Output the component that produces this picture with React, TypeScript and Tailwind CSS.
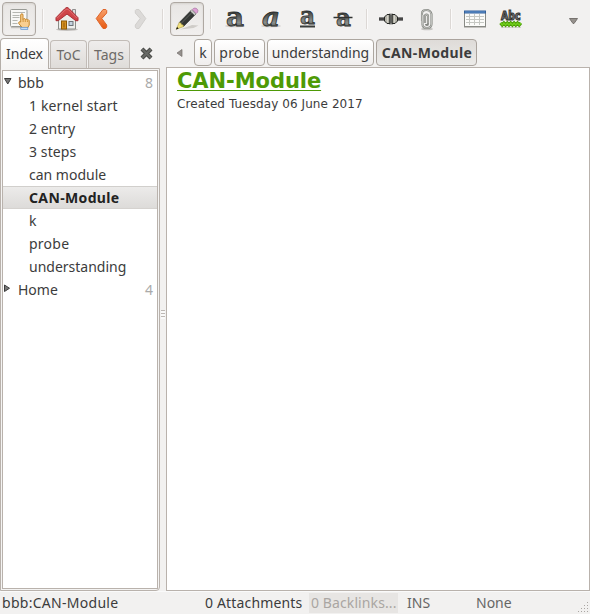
import React from "react";

function Sep({ className = "" }: { className?: string }) {
  return <span className={"h-5 w-px shrink-0 bg-[#dcd8d5] shadow-[1px_0_0_#fbfafa] " + className} />;
}

function IndexIcon() {
  return (
    <svg width="24" height="24" viewBox="0 0 24 24">
      <path d="M4 20.500h16" stroke="#c3c0bc" strokeWidth="1.500" />
      <rect x="3.500" y="2.500" width="16.500" height="17" rx="1" fill="#f8f8f6" stroke="#999b96" />
      <path d="M5.500 5.500h12.500M5.500 8.500h7M5.500 10.500h7M5.500 13.500h5M5.500 16.500h5" stroke="#b5b7b2" />
      <path d="M13.700 15V8q.1-1.200 1.200-1.200T16 8v4.500q.4-.9 1.300-.9t1.100.9q.4-.5 1.100-.4t1 .8q1.100-.5 1.700.7v4.500L20.500 21h-5l-3.700-4.500q-.4-1.500.6-1.700z" fill="#f9cf91" stroke="#c17d18" strokeWidth=".9" />
      <path d="M16.100 12.500V15M18.300 12.700V15M20.400 13.400V15" stroke="#c17d18" strokeWidth=".7" />
      <rect x="13.800" y="20.300" width="7" height="2.200" fill="#c4dcf7" stroke="#6094cf" strokeWidth=".7" />
    </svg>
  );
}

function HomeIcon() {
  return (
    <svg width="24" height="26" viewBox="0 0 24 26">
      <ellipse cx="12" cy="23.500" rx="11" ry="1.500" fill="#c4c1be" />
      <path d="M17.500 3.500h3V10h-3z" fill="#dfdfdc" stroke="#777" strokeWidth=".8" />
      <path d="M3.500 13 12 5l8.500 8v10h-17z" fill="#edeeeb" stroke="#8b8d88" />
      <rect x="6.500" y="15" width="5" height="8" fill="#d6931f" stroke="#8f5902" />
      <rect x="8" y="16.500" width="2" height="5" fill="#b57515" />
      <rect x="14" y="15.500" width="4" height="4" fill="#c4d2df" stroke="#6d7277" />
      <path d="M12 1.500Q11 1.500 9.500 3L1 11.700v3h2.200L12 8l8.800 6.700H23v-3L14.500 3Q13 1.500 12 1.500z" fill="#cf4549" stroke="#a92d34" strokeLinejoin="round" />
      <path d="m2 12.200 8.500-8.500Q12 2.300 13.500 3.700L22 12.200" fill="none" stroke="#e27a7b" strokeWidth=".8" />
    </svg>
  );
}

function Chevron({ forward = false }: { forward?: boolean }) {
  return (
    <svg width="13" height="22" viewBox="0 0 13 22" className={forward ? "-scale-x-100" : ""}>
      <defs>
        <linearGradient id="orange" x2="0" y2="1"><stop stopColor="#f8a06a" /><stop offset="1" stopColor="#e75a12" /></linearGradient>
      </defs>
      <path d="M8 1.500 1.200 10.500 8 20.500h2.500l1.200-1.500v-2L6.800 10.500 11.700 5V2.500l-.9-1z" fill={forward ? "#dcdad8" : "url(#orange)"} stroke={forward ? "#d1cfcc" : "#de6429"} strokeLinejoin="round" />
    </svg>
  );
}

function PencilIcon() {
  return (
    <svg width="24" height="24" viewBox="0 0 24 24">
      <path d="M5 22.500 17 18l6.500.5-5 2.500z" fill="#cfccc8" />
      <path d="m4.300 15.500L16.500 3l4.300 4L8.500 19.500z" fill="#343735" stroke="#222422" strokeWidth=".6" />
      <path d="m6 16.500L18 4.500" stroke="#5e615d" strokeWidth="1" />
      <path d="m1.200 22.300 3-6.800 1.600.5.8 1.500 1.500.5.5 1.500z" fill="#f2e07d" stroke="#a99b43" strokeWidth=".6" />
      <path d="m1 22.500 1.100-2.600 1.500 1.600z" fill="#111" />
      <path d="m17.300 2.500 4 4 1.300-1.300q1-2.100-.8-3.500-2-1.300-3.500-.1z" fill="#dda0d5" stroke="#a875a0" strokeWidth=".7" />
      <path d="m16 3.500 4.200 4.200" stroke="#c6c7c4" strokeWidth="1.800" />
    </svg>
  );
}

function Letter({ kind }: { kind: "bold" | "italic" | "under" | "strike" }) {
  const large = kind === "bold" || kind === "italic";
  return (
    <svg width="22" height="36" viewBox="0 -6 22 36" className="overflow-visible">
      <defs>
        <linearGradient id="ink" x2="0" y2="1"><stop offset=".35" stopColor="#3a3d3c" /><stop offset=".7" stopColor="#8a8e8b" /><stop offset="1" stopColor="#303332" /></linearGradient>
      </defs>
      {large && <ellipse cx="11" cy="19" rx="10" ry="1.300" fill="#cfccc9" />}
      <text
        x={large ? 2 : 4} y={kind === "under" ? 16.500 : 18.500}
        textLength={large ? 18 : 15} lengthAdjust="spacingAndGlyphs"
        className={"font-['DejaVu_Serif',serif] font-bold " + (kind === "bold" ? "text-[26px]" : kind === "italic" ? "text-[26px] italic" : "text-[24px]")}
        fill="url(#ink)" stroke="#2c2f2d" strokeWidth=".8"
      >a</text>
      {kind === "under" && <path d="M4 19.500h15" stroke="#3b3e3c" strokeWidth="2" />}
      {kind === "strike" && <path d="M1.500 10.500h19" stroke="#303331" strokeWidth="1.500" />}
    </svg>
  );
}

function LinkIcon() {
  return (
    <svg width="26" height="16" viewBox="0 0 26 16">
      <path d="M1 8h6M19 8h6" stroke="#111" strokeWidth="3" />
      <path d="M1 8h6M19 8h6" stroke="#aaa" strokeWidth=".7" />
      <path d="M6.500 6 9 3.500h3v9H9L6.500 10zM19.500 6 17 3.500h-3v9h3l2.500-2.500z" fill="#b4b3a9" stroke="#232522" />
      <path d="M9.500 4.500v7M16.500 4.500v7" stroke="#d4d3ca" />
      <path d="M12 2.500v11M14 2.500v11" stroke="#30322e" />
    </svg>
  );
}

function ClipIcon() {
  return (
    <svg width="14" height="23" viewBox="0 0 14 23" fill="none">
      <ellipse cx="7" cy="21" rx="6" ry="1.300" fill="#c5c4c1" />
      <path d="M5 15V8q0-1.500 1.500-1.500T8 8v7.500q0 1.500-1 1.500t-1-1M2 13V5.500Q2 2 6.300 2T11.500 6v10q0 4-4.500 4t-4.500-3.500V7" stroke="#838580" strokeWidth="2.100" />
      <path d="M5 15V8q0-1.500 1.500-1.500T8 8v7.500M2 13V5.500Q2 2 6.300 2T11.500 6v10q0 4-4.500 4t-4.500-3.500V7" stroke="#d7d9d4" strokeWidth=".7" />
    </svg>
  );
}

function TableIcon() {
  return (
    <svg width="24" height="20" viewBox="0 0 24 20">
      <path d="M1 18.500h22" stroke="#c3c1be" strokeWidth="1" />
      <rect x="1.500" y="2.500" width="21" height="15" fill="#fbfbf9" stroke="#888a85" />
      <path d="M3 7.500h18M3 10.500h18M3 13.500h18M6.500 5v11M11.500 5v11M16.500 5v11" stroke="#c5c7c2" />
      <rect x="1.500" y="2" width="21" height="2" fill="#6798d2" stroke="#315f9a" />
    </svg>
  );
}

function SpellIcon() {
  return (
    <svg width="24" height="27" viewBox="0 -3 24 27" className="overflow-visible">
      <path d="M2 18.500h20" stroke="#d2d0cd" />
      <text x="2" y="11" textLength="19.500" lengthAdjust="spacingAndGlyphs" className="font-['DejaVu_Sans',sans-serif] text-[11.5px] font-bold" fill="#888" stroke="#303230" strokeWidth="1.100">Abc</text>
      <path d="m1.500 14 1.700 2 1.700-2 1.700 2 1.700-2 1.700 2 1.700-2 1.700 2 1.700-2 1.700 2 1.700-2 1.700 2 1.700-2" fill="none" stroke="#4b9c07" strokeWidth="3.200" />
      <path d="m1.500 14 1.700 2 1.700-2 1.700 2 1.700-2 1.700 2 1.700-2 1.700 2 1.700-2 1.700 2 1.700-2 1.700 2 1.700-2" fill="none" stroke="#72cf1d" strokeWidth="1.300" />
    </svg>
  );
}

const pressed = "flex h-[34px] w-[34px] shrink-0 items-center justify-center rounded border border-[#aea8a2] bg-linear-to-b from-[#e8e6e4] to-[#f1efee] shadow-[inset_0_1px_2px_#d6d2ce] ";

function Toolbar() {
  return (
    <header className="flex h-[38px] items-center">
      <button className={pressed + "ml-[2px]"}><IndexIcon /></button>
      <Sep className="ml-[6px]" />
      <span className="ml-[12px]"><HomeIcon /></span>
      <span className="ml-[16px]"><Chevron /></span>
      <span className="ml-[26px]"><Chevron forward /></span>
      <Sep className="ml-[15px]" />
      <button className={pressed + "ml-[7px]"}><PencilIcon /></button>
      <Sep className="ml-[6px]" />
      <span className="ml-[13px]"><Letter kind="bold" /></span>
      <span className="ml-[14px]"><Letter kind="italic" /></span>
      <span className="ml-[14px]"><Letter kind="under" /></span>
      <span className="ml-[14px]"><Letter kind="strike" /></span>
      <Sep className="ml-[12px]" />
      <span className="ml-[11px]"><LinkIcon /></span>
      <span className="ml-[16px]"><ClipIcon /></span>
      <Sep className="ml-[16px]" />
      <span className="ml-[12px]"><TableIcon /></span>
      <span className="ml-[12px]"><SpellIcon /></span>
      <svg className="ml-[46px] mt-1" width="9" height="6"><path d="M.5.5h8L5 5.500H4z" fill="#96928d" stroke="#77736f" /></svg>
    </header>
  );
}

const pages = [
  { name: "1 kernel start", cls: "tracking-[0.12px]" },
  { name: "2 entry", cls: "" },
  { name: "3 steps", cls: "tracking-[0.1px]" },
  { name: "can module", cls: "" },
  { name: "CAN-Module", cls: "font-bold tracking-[0.36px] text-[#222] border-y border-t-[#d1cfcc] border-b-[#d5d2cf] bg-linear-to-b from-[#ecebea] to-[#dddbd9]" },
  { name: "k", cls: "" },
  { name: "probe", cls: "tracking-[0.25px]" },
  { name: "understanding", cls: "" },
];

function Sidebar() {
  return (
    <aside className="flex h-[553px] w-[160px] shrink-0 flex-col">
      <nav className="flex h-[30px] shrink-0 items-end text-[#6d6a67]">
        <div className="z-10 -mb-px flex h-[31px] w-[49px] items-center justify-center rounded-t border border-b-0 border-[#b4aea8] bg-linear-to-b from-white to-[#f5f4f3] text-[#3c3c3c]">Index</div>
        <div className="ml-px flex h-[28px] w-[37px] items-center justify-center rounded-t border border-b-0 border-[#c2bcb7] bg-linear-to-b from-[#efedec] to-[#dfdcd9] pt-px">ToC</div>
        <div className="ml-px flex h-[28px] w-[42px] items-center justify-center rounded-t border border-b-0 border-[#c2bcb7] bg-linear-to-b from-[#efedec] to-[#dfdcd9] pt-px">Tags</div>
        <svg className="mb-[8px] ml-[10px]" width="13" height="13" viewBox="0 0 13 13"><path d="m2 2 9 9m0-9-9 9" stroke="#4b4c49" strokeWidth="4.200" /><path d="m2 2 9 9m0-9-9 9" stroke="#686a66" strokeWidth="2" /></svg>
      </nav>
      <div className="flex min-h-0 flex-1 rounded-br border border-[#b9b2ac] bg-[#f5f4f3] p-px">
        <div className="flex-1 border border-[#b9b2ac] bg-white">
          <div className="flex h-[23px] items-center pr-[4px]">
            <svg className="-mt-0.5" width="15" height="9" viewBox="0 0 15 9"><path d="M1.500 1.500h6.500L4.750 7z" fill="#777" stroke="#3c3c3c" /></svg>
            <span className="flex-1">bbb</span><span className="text-[#aaa]">8</span>
          </div>
          {pages.map(p => <div key={p.name} className={"flex h-[23px] items-center pl-[26px] whitespace-nowrap " + p.cls}>{p.name}</div>)}
          <div className="flex h-[23px] items-center pr-[4px]">
            <svg className="-mt-0.5" width="15" height="9" viewBox="0 0 15 9"><path d="M1.500 1v6.500l5-3.250z" fill="#777" stroke="#3c3c3c" /></svg>
            <span className="flex-1">Home</span><span className="text-[#aaa]">4</span>
          </div>
        </div>
      </div>
    </aside>
  );
}

const crumb = "flex h-[27px] items-center justify-center rounded-[4px] border ";

export default function App() {
  return (
    <div className="flex h-[614px] w-[590px] flex-col overflow-hidden bg-[#f2f1f0] font-['Noto_Sans','Open_Sans',sans-serif] text-[14px] leading-[20px] text-[#3c3c3c]">
      <Toolbar />
      <main className="flex h-[553px]">
        <Sidebar />
        <div className="flex w-[6px] items-center justify-center">
          <div className="h-[9px] w-1 bg-[repeating-linear-gradient(to_bottom,#bdb8b4_0px,#bdb8b4_1px,#fafafa_1px,#fafafa_3px)]" />
        </div>
        <section className="flex w-[424px] flex-col">
          <nav className="flex h-[29px] shrink-0 items-center">
            <svg className="ml-[10px]" width="7" height="8"><path d="M6 .5v7L1 4z" fill="#95918d" stroke="#736f6c" strokeWidth=".7" /></svg>
            <span className={crumb + "ml-[11px] w-[18px] border-[#aca69f] bg-linear-to-b from-white to-[#f0eeed]"}>k</span>
            <span className={crumb + "ml-[2px] w-[51px] border-[#aca69f] bg-linear-to-b from-white to-[#f0eeed] tracking-[0.25px]"}>probe</span>
            <span className={crumb + "ml-[2px] w-[107px] border-[#aca69f] bg-linear-to-b from-white to-[#f0eeed]"}>understanding</span>
            <span className={crumb + "ml-[2px] w-[101px] border-[#aaa39d] bg-linear-to-b from-[#dedbd8] to-[#ecebe9] pt-px pl-px font-bold tracking-[0.36px]"}>CAN-Module</span>
          </nav>
          <article className="flex-1 border border-[#b9b2ac] bg-white pl-[10px] font-['DejaVu_Sans',sans-serif]">
            <h1 className="h-[26px] w-[144px] text-[21px] leading-[27px] font-bold tracking-[-0.06px] whitespace-nowrap text-[#4e9a06] underline decoration-1 underline-offset-2">CAN-Module</h1>
            <p className="text-[12px] leading-[20px] tracking-[0.08px]">Created Tuesday 06 June 2017</p>
          </article>
        </section>
      </main>
      <footer className="flex h-[23px] items-center border-t border-[#fafafa]">
        <span className="w-[203px] pl-[2px] tracking-[0.28px]">bbb:CAN-Module</span>
        <span className="w-[106px] pl-[2px] tracking-[0.16px] whitespace-nowrap">0 Attachments</span>
        <span className="h-[20px] w-[89px] bg-[#e7e5e3] pl-[2px] tracking-[0.1px] whitespace-nowrap text-[#aaa6a2]">0 Backlinks...</span>
        <span className="w-[69px] pl-[9px] text-[#666]">INS</span>
        <span className="flex-1 pl-[9px] text-[#666]">None</span>
        <svg className="mt-[10px]" width="12" height="12" fill="#aaa6a2"><path d="M9 0h1v1H9zM6 3h1v1H6zM9 3h1v1H9zM3 6h1v1H3zM6 6h1v1H6zM9 6h1v1H9zM0 9h1v1H0zM3 9h1v1H3zM6 9h1v1H6zM9 9h1v1H9z" /></svg>
      </footer>
    </div>
  );
}
